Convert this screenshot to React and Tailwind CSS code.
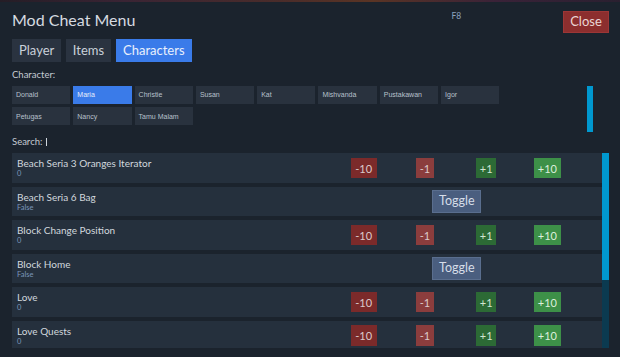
import React from "react";

const chars = [
  ["Donald", false],
  ["Maria", true],
  ["Christie", false],
  ["Susan", false],
  ["Kat", false],
  ["Mishvanda", false],
  ["Pustakawan", false],
  ["Igor", false],
  ["Petugas", false],
  ["Nancy", false],
  ["Tamu Malam", false],
];

const rows = [
  { name: "Beach Seria 3 Oranges Iterator", value: "0", type: "num" },
  { name: "Beach Seria 6 Bag", value: "False", type: "bool" },
  { name: "Block Change Position", value: "0", type: "num" },
  { name: "Block Home", value: "False", type: "bool" },
  { name: "Love", value: "0", type: "num" },
  { name: "Love Quests", value: "0", type: "num" },
];

function NumControls() {
  return (
    <div className="grid grid-cols-4 w-[245px] mr-[24.3px] items-center justify-items-center self-center">
      <div className="w-[26px] h-[20.5px] bg-[#7b2a2a] text-[#dccaca] text-[11px] leading-none flex items-center justify-center">-10</div>
      <div className="w-[17.6px] h-[20.5px] bg-[#8b3d3d] text-[#dccaca] text-[11px] leading-none flex items-center justify-center">-1</div>
      <div className="w-[19.4px] h-[20.5px] bg-[#2c6a35] text-[#d2e6d2] text-[11px] leading-none flex items-center justify-center">+1</div>
      <div className="w-[27.3px] h-[20.5px] bg-[#3d9048] text-[#dcefdc] text-[11px] leading-none flex items-center justify-center">+10</div>
    </div>
  );
}

function BoolControls() {
  return (
    <div className="w-[245px] mr-[24.3px] flex justify-center self-center">
      <div className="ml-[2.5px] w-[49px] h-[22.3px] bg-[#4a5e7f] border border-[#5a6e8e] text-[#d6dde8] text-[12.5px] leading-none flex items-center justify-center">
        Toggle
      </div>
    </div>
  );
}

export default function App() {
  return (
    <div
      className="w-[620px] h-[357px] bg-[#1b232d] overflow-hidden flex flex-col"
      style={{ fontFamily: "Lato, 'Open Sans', sans-serif" }}
    >
      <div className="h-[2px] bg-[linear-gradient(90deg,#251d26,#3a2434_20%,#4a2c2a_45%,#5a3424_60%,#3a2238_80%,#2a2030)]" />

      {/* header */}
      <div className="flex items-start pl-[12px] pr-[11.3px] pt-[8.3px]">
        <div className="flex-1 text-[16px] leading-[20px] text-[#d6dbe1]">Mod Cheat Menu</div>
        <div className="mt-[0.8px] mr-[102px] text-[8.5px] leading-[10px] text-[#8aa0bd]">F8</div>
        <div className="mt-[0.4px] w-[45.4px] h-[22.6px] bg-[#8c2e2e] border border-[#9c3636] text-[#ead6d6] text-[13px] leading-none flex items-center justify-center">
          Close
        </div>
      </div>

      {/* tabs */}
      <div className="flex gap-[5px] pl-[12px] mt-[5.7px]">
        <div className="w-[49.3px] h-[23px] bg-[#2a3340] text-[#c9d0d9] text-[13px] leading-none flex items-center justify-center">Player</div>
        <div className="w-[44.3px] h-[23px] bg-[#2a3340] text-[#c9d0d9] text-[13px] leading-none flex items-center justify-center">Items</div>
        <div className="w-[76.4px] h-[23px] bg-[#3a7be9] text-[#e9f0fc] text-[13px] leading-none flex items-center justify-center">Characters</div>
      </div>

      {/* character label */}
      <div className="pl-[12px] mt-[7.2px] text-[9.5px] leading-[12px] text-[#c5cbd3]">Character:</div>

      {/* characters grid */}
      <div className="flex items-start pl-[12px] pr-[26.7px] mt-[4.5px]">
        <div className="flex-1">
          <div className="grid grid-cols-[repeat(8,58.3px)] gap-x-[3px] gap-y-[3px]">
            {chars.map(([n, active]) => (
              <div
                key={n}
                className={
                  "h-[18.3px] pl-[4px] flex items-center text-[7px] leading-none " +
                  (active ? "bg-[#3a7be9] text-[#e6eefb]" : "bg-[#29323e] text-[#b8c1cc]")
                }
                style={{ fontFamily: "'Liberation Sans', Arial, sans-serif" }}
              >
                {n}
              </div>
            ))}
          </div>
        </div>
        <div className="w-[6.6px] h-[46px] bg-[#0098cf]" />
      </div>

      {/* search */}
      <div className="pl-[12px] mt-[4.5px] flex items-center text-[9.5px] leading-[12px] text-[#c5cbd3]">
        <span>Search:</span>
        <span className="ml-[4px] w-[1px] h-[8.5px] bg-[#d0d6dd]" />
      </div>

      {/* list */}
      <div className="flex pl-[12px] pr-[11px] mt-[5.1px] h-[194.4px] overflow-hidden">
        <div className="flex-1 flex flex-col gap-[3.8px]">
          {rows.map((r) => (
            <div key={r.name} className="shrink-0 h-[29.7px] bg-[#25303d] flex">
              <div className="flex-1 pl-[5px] pt-[4px] flex flex-col">
                <div className="text-[10px] leading-[12px] text-[#d2d8de]">{r.name}</div>
                <div className="text-[7.5px] leading-[9px] text-[#7b97ba]">{r.value}</div>
              </div>
              {r.type === "num" ? <NumControls /> : <BoolControls />}
            </div>
          ))}
        </div>
        <div className="w-[6.7px] h-full bg-[#0b3a50] flex flex-col">
          <div className="h-[126.7px] bg-[#0098cf]" />
        </div>
      </div>
    </div>
  );
}
